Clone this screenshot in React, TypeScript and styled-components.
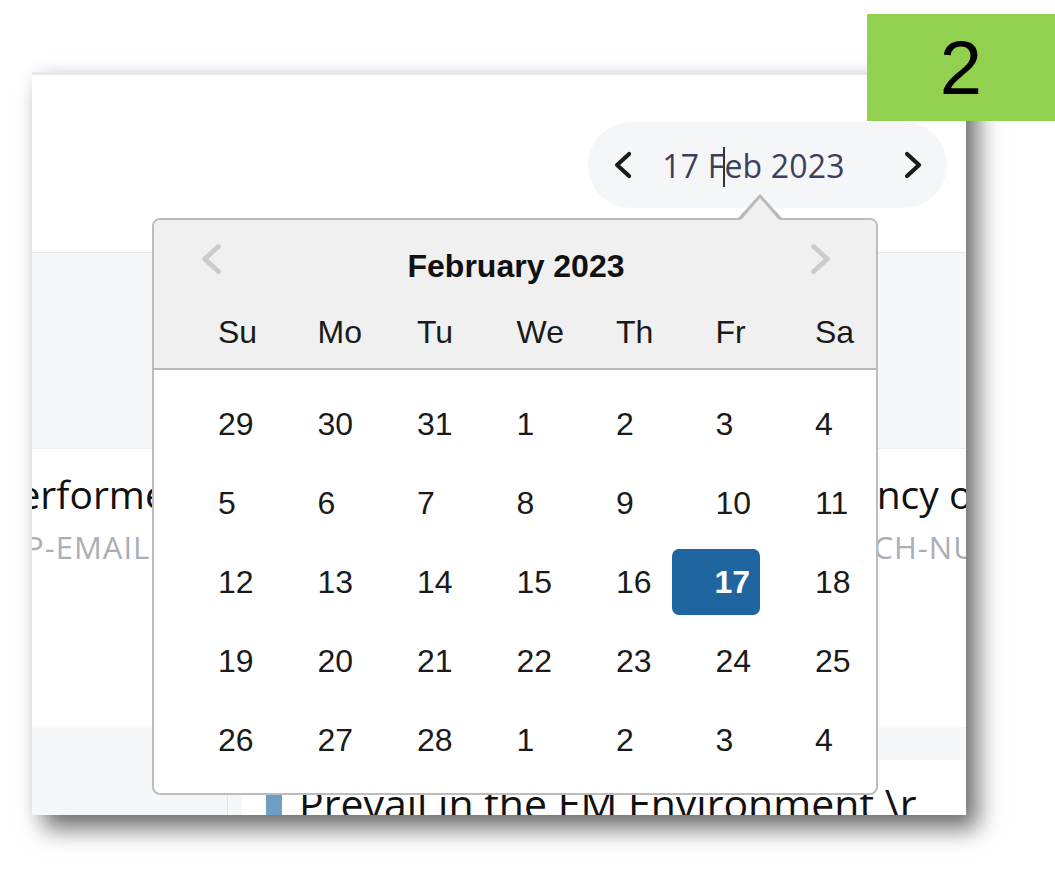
import React from 'react';
import styled, { createGlobalStyle } from 'styled-components';

const GlobalStyle = createGlobalStyle`
  html, body {
    margin: 0;
    padding: 0;
    background: #fff;
  }
  body {
    font-family: 'Liberation Sans', Arial, sans-serif;
  }
`;

const Page = styled.div`
  position: relative;
  width: 1055px;
  height: 881px;
  box-sizing: border-box;
  padding: 72px 0 0 32px;
  overflow: hidden;
`;

const StepBadge = styled.div`
  position: absolute;
  top: 14px;
  left: 867px;
  width: 188px;
  height: 107px;
  background: #92d050;
  display: flex;
  align-items: center;
  justify-content: center;
  font-size: 76px;
  line-height: 1;
  color: #000;
  z-index: 5;
`;

const Frame = styled.div`
  position: relative;
  width: 934px;
  height: 743px;
  box-sizing: border-box;
  border-top: 3px solid #e4e8ed;
  background: #fff;
  box-shadow: 12px 14px 22px rgba(0, 0, 0, 0.55), 0 0 16px rgba(0, 0, 0, 0.07);
  overflow: hidden;
  display: flex;
  flex-direction: column;
`;

const TopBar = styled.div`
  height: 178px;
  flex-shrink: 0;
  border-bottom: 1px solid #e6e8eb;
  display: flex;
  justify-content: flex-end;
  align-items: flex-start;
  padding: 47px 19px 0 0;
  box-sizing: border-box;
`;

const DatePill = styled.div`
  width: 359px;
  height: 86px;
  border-radius: 43px;
  background: #f5f6f8;
  display: flex;
  align-items: center;
  padding: 0 24px 0 25px;
  box-sizing: border-box;
`;

const PillText = styled.span`
  margin-left: 29px;
  font-family: 'Open Sans', sans-serif;
  font-size: 32px;
  font-weight: 500;
  letter-spacing: 0.2px;
  color: #3c3f5c;
  white-space: nowrap;
`;

const Caret = styled.span`
  display: inline-block;
  width: 2px;
  height: 40px;
  margin: 0 -1px;
  vertical-align: -9px;
  background: #333;
`;

const PillNext = styled.span`
  margin-left: auto;
  display: flex;
`;

const Main = styled.div`
  flex: 1;
  background: #f6f7f9;
  display: flex;
  flex-direction: column;
  padding-top: 195px;
`;

const CardRow = styled.div`
  display: grid;
  grid-template-columns: 745px 745px;
  gap: 16px;
  height: 279px;
  margin-left: -29px;
  flex-shrink: 0;
`;

const Card = styled.div`
  background: #fff;
  border-top: 1px solid #eceef1;
  padding: 21px 0 0 0;
  white-space: nowrap;
  overflow: hidden;
`;

const CardTitle = styled.div<{ $indent?: number }>`
  font-family: 'Open Sans', sans-serif;
  font-size: 39px;
  color: #111;
  line-height: 48px;
  margin-left: ${(p) => p.$indent || 0}px;
`;

const CardLabel = styled.div<{ $indent?: number }>`
  font-family: 'Open Sans', sans-serif;
  font-size: 31px;
  letter-spacing: 1px;
  text-transform: uppercase;
  color: #aaaeb6;
  margin-top: 8px;
  margin-left: ${(p) => p.$indent || 0}px;
`;

const BottomRow = styled.div`
  flex: 1;
  display: grid;
  grid-template-columns: 196px 1fr;
`;

const Sidebar = styled.div`
  border-right: 1px solid #e2e5e9;
`;

const PanelArea = styled.div`
  padding: 33px 0 0 14px;
  display: flex;
`;

const Panel = styled.div`
  flex: 1;
  background: #fff;
  display: flex;
  align-items: flex-start;
  padding: 19px 0 0 24px;
  white-space: nowrap;
`;

const AccentBar = styled.div`
  width: 16px;
  height: 40px;
  margin-top: 16px;
  background: #6f9ec4;
  flex-shrink: 0;
`;

const PanelText = styled.div`
  margin-left: 17px;
  font-family: 'Open Sans', sans-serif;
  font-size: 41px;
  line-height: 48px;
  color: #111;
`;

const Popup = styled.div`
  position: absolute;
  left: 120px;
  top: 143px;
  width: 726px;
  box-sizing: border-box;
  border: 2px solid #bdbdbd;
  border-radius: 8px;
  background: #fff;
  padding-bottom: 13px;
  z-index: 3;

  &::before,
  &::after {
    content: '';
    position: absolute;
    width: 0;
    height: 0;
    border-left: solid transparent;
    border-right: solid transparent;
    border-bottom-style: solid;
  }

  &::before {
    left: 584px;
    top: -26px;
    border-left-width: 22px;
    border-right-width: 22px;
    border-bottom-width: 24px;
    border-bottom-color: #b9b9b9;
  }

  &::after {
    left: 587px;
    top: -22px;
    border-left-width: 19px;
    border-right-width: 19px;
    border-bottom-width: 22px;
    border-bottom-color: #f0f0f0;
  }
`;

const PopupHeader = styled.div`
  background: #f0f0f0;
  border-radius: 6px 6px 0 0;
  border-bottom: 2px solid #b9b9b9;
  padding: 26px 0 16px 0;
`;

const MonthRow = styled.div`
  display: flex;
  align-items: center;
  height: 40px;
  padding: 0 44px 0 46px;
`;

const MonthTitle = styled.div`
  flex: 1;
  text-align: center;
  font-size: 32px;
  font-weight: 700;
  color: #111;
  line-height: 40px;
`;

const NavButton = styled.span`
  display: flex;
  margin-top: -14px;
`;

const DayGrid = styled.div<{ $rowHeight: number }>`
  display: grid;
  grid-template-columns: repeat(6, 99.5px) 1fr;
  grid-auto-rows: ${(p) => p.$rowHeight}px;
  align-items: center;
  padding-left: 64px;
`;

const WeekdayGrid = styled(DayGrid)`
  margin-top: 26px;
`;

const BodyGrid = styled(DayGrid)`
  padding-top: 14.5px;
`;

const Cell = styled.div<{ $height: number }>`
  font-size: 32px;
  line-height: ${(p) => p.$height}px;
  color: #1a1a1a;
`;

const SelectedCell = styled.div`
  justify-self: start;
  width: 88px;
  height: 66px;
  margin-left: -44px;
  padding-left: 43px;
  box-sizing: border-box;
  border-radius: 7px;
  background: #1f65a0;
  color: #fff;
  font-size: 32px;
  font-weight: 700;
  line-height: 66px;
`;

const Chevron = ({ dir, color, size }: { dir: 'left' | 'right'; color: string; size: number }) => (
  <svg width={size * 0.72} height={size} viewBox="0 0 20 28" fill="none">
    <polyline
      points={dir === 'left' ? '16,3 4,14 16,25' : '4,3 16,14 4,25'}
      stroke={color}
      strokeWidth={4.2}
      strokeLinecap="round"
      strokeLinejoin="round"
    />
  </svg>
);

const WEEKDAYS = ['Su', 'Mo', 'Tu', 'We', 'Th', 'Fr', 'Sa'];

const DAYS = [
  29, 30, 31, 1, 2, 3, 4,
  5, 6, 7, 8, 9, 10, 11,
  12, 13, 14, 15, 16, 17, 18,
  19, 20, 21, 22, 23, 24, 25,
  26, 27, 28, 1, 2, 3, 4,
];

const SELECTED_INDEX = 19;

export default function App() {
  return (
    <Page>
      <GlobalStyle />
      <StepBadge>2</StepBadge>
      <Frame>
        <TopBar>
          <DatePill>
            <Chevron dir="left" color="#1b1b1b" size={28} />
            <PillText>
              17 F<Caret />eb 2023
            </PillText>
            <PillNext>
              <Chevron dir="right" color="#1b1b1b" size={28} />
            </PillNext>
          </DatePill>
        </TopBar>

        <Main>
          <CardRow>
            <Card>
              <CardTitle $indent={-8}>Performers of the Month</CardTitle>
              <CardLabel $indent={-3}>OP-EMAIL CAMPAIGN</CardLabel>
            </Card>
            <Card>
              <CardTitle $indent={-15}>Frequency of Contact</CardTitle>
              <CardLabel>DISPATCH-NUMBER</CardLabel>
            </Card>
          </CardRow>

          <BottomRow>
            <Sidebar />
            <PanelArea>
              <Panel>
                <AccentBar />
                <PanelText>Prevail in the EM Environment \r</PanelText>
              </Panel>
            </PanelArea>
          </BottomRow>
        </Main>

        <Popup>
          <PopupHeader>
            <MonthRow>
              <NavButton>
                <Chevron dir="left" color="#cbcbcb" size={32} />
              </NavButton>
              <MonthTitle>February 2023</MonthTitle>
              <NavButton>
                <Chevron dir="right" color="#cbcbcb" size={32} />
              </NavButton>
            </MonthRow>
            <WeekdayGrid $rowHeight={40}>
              {WEEKDAYS.map((d) => (
                <Cell key={d} $height={40}>
                  {d}
                </Cell>
              ))}
            </WeekdayGrid>
          </PopupHeader>
          <BodyGrid $rowHeight={79}>
            {DAYS.map((d, i) =>
              i === SELECTED_INDEX ? (
                <SelectedCell key={i}>{d}</SelectedCell>
              ) : (
                <Cell key={i} $height={79}>
                  {d}
                </Cell>
              )
            )}
          </BodyGrid>
        </Popup>
      </Frame>
    </Page>
  );
}
